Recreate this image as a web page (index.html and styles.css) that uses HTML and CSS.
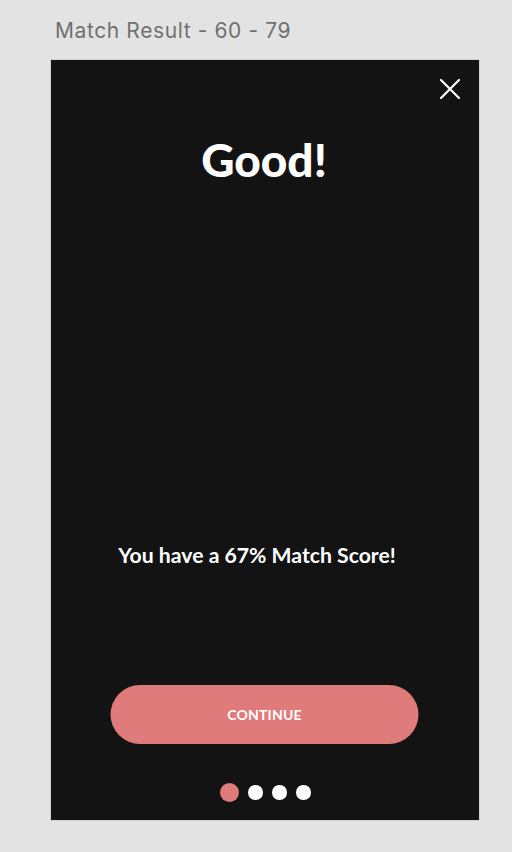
FILE: index.html
```html
<!DOCTYPE html>
<html>
<head>
<meta charset="utf-8">
<link rel="stylesheet" href="styles.css">
</head>
<body>
<div class="page">
  <div class="artboard-label">Match Result - 60 - 79</div>
  <div class="frame">
    <div class="close-row">
      <svg class="close-icon" width="20" height="20" viewBox="0 0 20 20" aria-label="Close">
        <path d="M1 1 L19 19 M19 1 L1 19" stroke="#ffffff" stroke-width="2.2" stroke-linecap="square" fill="none"/>
      </svg>
    </div>
    <h1 class="headline">Good!</h1>
    <div class="spacer"></div>
    <p class="score">You have a 67% Match Score!</p>
    <button class="continue">CONTINUE</button>
    <div class="dots">
      <span class="dot active"></span>
      <span class="dot"></span>
      <span class="dot"></span>
      <span class="dot"></span>
    </div>
  </div>
</div>
</body>
</html>
```
FILE: styles.css
```css
html, body {
  margin: 0;
  padding: 0;
  background: #e3e3e3;
}
.page {
  padding: 0 0 0 50px;
}
.artboard-label {
  font-family: Inter, "Liberation Sans", sans-serif;
  font-size: 21px;
  letter-spacing: 0.6px;
  line-height: 24px;
  color: #707070;
  padding: 19px 0 0 5px;
  height: 59px;
  box-sizing: border-box;
}
.frame {
  width: 428px;
  height: 760px;
  background: #131313;
  border: 1px solid #d2d2d2;
  display: flex;
  flex-direction: column;
  align-items: center;
  font-family: Lato, "Open Sans", sans-serif;
  color: #ffffff;
}
.close-row {
  align-self: stretch;
  display: flex;
  justify-content: flex-end;
  padding: 19px 19px 0 0;
}
.close-icon {
  display: block;
}
.headline {
  margin: 38px 0 0 0;
  font-size: 46px;
  line-height: 46px;
  font-weight: 900;
  transform: translateX(-1px);
}
.spacer {
  flex: 1;
}
.score {
  margin: 0;
  font-size: 21.2px;
  line-height: 24px;
  font-weight: 700;
  transform: translateX(-8px);
}
.continue {
  margin-top: 118px;
  width: 308px;
  height: 59px;
  border: none;
  border-radius: 30px;
  background: #e07b7b;
  color: #ffffff;
  font-family: Lato, "Open Sans", sans-serif;
  font-weight: 700;
  font-size: 14px;
  letter-spacing: 0.2px;
  padding: 0;
  transform: translateX(-0.5px);
}
.dots {
  display: flex;
  align-items: center;
  gap: 9.5px;
  margin: 39px 0 18px 0;
}
.dot {
  width: 14.5px;
  height: 14.5px;
  border-radius: 50%;
  background: #ffffff;
}
.dot.active {
  width: 19px;
  height: 19px;
  background: #e07b7b;
}
```
